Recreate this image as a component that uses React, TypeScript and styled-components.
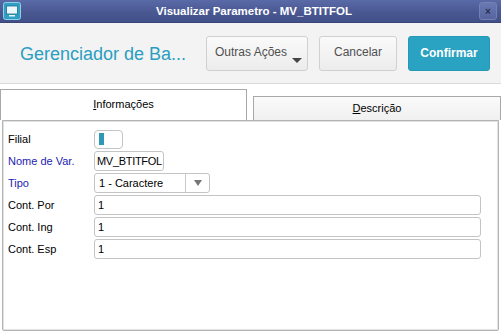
import { type FC } from "react";
import styled, { createGlobalStyle } from "styled-components";

const GlobalStyle = createGlobalStyle`
  html, body {
    margin: 0;
    padding: 0;
    background: #ffffff;
    font-family: "Liberation Sans", Arial, sans-serif;
  }
`;

const Window = styled.div`
  width: 501px;
  height: 333px;
  display: flex;
  flex-direction: column;
  background: #ffffff;
  overflow: hidden;
`;

const TitleBar = styled.div`
  height: 23px;
  display: flex;
  align-items: center;
  padding: 0 3px;
  background: linear-gradient(#5a6aa8, #4a5892 55%, #42508a);
  border-bottom: 1px solid #3a4678;
  box-sizing: border-box;
`;

const TitleText = styled.div`
  flex: 1;
  text-align: center;
  color: #ffffff;
  font-size: 11.5px;
  font-weight: bold;
  padding-left: 8px;
`;

const CloseButton = styled.div`
  width: 16px;
  height: 16px;
  border: 1px solid #7480b4;
  border-radius: 3px;
  background: linear-gradient(#6a78b4, #56649e);
  display: flex;
  align-items: center;
  justify-content: center;
  color: #2a3050;
  font-size: 10px;
  font-weight: bold;
  margin-right: 1px;
`;

const Header = styled.div`
  height: 61px;
  display: flex;
  align-items: center;
  padding: 0 11px 0 20px;
  background: #f3f3f3;
  border-bottom: 1px solid #dadada;
  box-sizing: border-box;
`;

const AppTitle = styled.div`
  flex: 1;
  min-width: 0;
  white-space: nowrap;
  color: #2a9ec2;
  font-size: 18px;
  padding-top: 3px;
`;

const ActionButton = styled.div<{ $primary?: boolean; $w: number; $menu?: boolean }>`
  position: relative;
  flex: none;
  width: ${(p) => p.$w}px;
  height: 35px;
  margin-left: 11px;
  box-sizing: border-box;
  display: flex;
  align-items: center;
  justify-content: center;
  font-size: 12px;
  border-radius: 3px;
  color: ${(p) => (p.$primary ? "#ffffff" : "#505050")};
  font-weight: ${(p) => (p.$primary ? "bold" : "normal")};
  background: ${(p) => (p.$primary ? "#2aa2c2" : "linear-gradient(#fafafa, #ececec)")};
  border: 1px solid ${(p) => (p.$primary ? "#2598b6" : "#d0d0d0")};
  padding-bottom: ${(p) => (p.$primary ? 0 : 2)}px;
  padding-right: ${(p) => (p.$menu ? 12 : 0)}px;
`;

const Caret = styled.span`
  position: absolute;
  right: 5px;
  bottom: 7px;
  width: 0;
  height: 0;
  border-left: 5px solid transparent;
  border-right: 5px solid transparent;
  border-top: 5px solid #444;
`;

const TabStrip = styled.div`
  display: flex;
  align-items: flex-end;
  margin-top: 5px;
  height: 31px;
  gap: 6px;
`;

const Tab = styled.div<{ $active?: boolean }>`
  width: ${(p) => (p.$active ? 247 : 248)}px;
  height: ${(p) => (p.$active ? 31 : 24)}px;
  box-sizing: border-box;
  border: 1px solid #a8a8a8;
  border-bottom: none;
  background: ${(p) => (p.$active ? "#ffffff" : "linear-gradient(#fafafa, #f0f0f0)")};
  display: flex;
  align-items: center;
  justify-content: center;
  font-size: 11px;
  color: #000;
  padding-bottom: 2px;
  & u {
    text-decoration: underline;
  }
`;

const Panel = styled.div`
  margin: 0 2px 2px 2px;
  flex: 1;
  border: 1px solid #b4b4b4;
  box-shadow: inset 0 0 0 1px #e2e2e2;
  border-radius: 0 0 2px 2px;
  padding: 8px 17px 0 5px;
  display: flex;
  flex-direction: column;
  gap: 2px;
`;

const Row = styled.div`
  display: flex;
  align-items: center;
  min-height: 20px;
`;

const Label = styled.div<{ $blue?: boolean }>`
  width: 86px;
  flex: none;
  font-size: 11px;
  color: ${(p) => (p.$blue ? "#2323b4" : "#000")};
`;

const Field = styled.div<{ $w?: number; $tight?: boolean }>`
  ${(p) => (p.$w ? `width: ${p.$w}px; flex: none;` : "flex: 1;")}
  height: 20px;
  box-sizing: border-box;
  border: 1px solid #c4c4c4;
  border-radius: 3px;
  background: #fff;
  font-size: 11px;
  letter-spacing: ${(p) => (p.$tight ? "-0.3px" : "0")};
  padding: 0 ${(p) => (p.$tight ? 2 : 3)}px;
  display: flex;
  align-items: center;
  overflow: hidden;
  white-space: nowrap;
`;

const Toggle = styled.div`
  width: 29px;
  height: 19px;
  box-sizing: border-box;
  border: 1px solid #c4c4c4;
  border-radius: 4px;
  display: flex;
  align-items: center;
  padding-left: 4px;
  &::before {
    content: "";
    width: 5px;
    height: 12px;
    background: #2e98b6;
  }
`;

const SelectBox = styled(Field)`
  padding: 0;
`;

const SelectText = styled.div`
  flex: 1;
  padding-left: 4px;
`;

const SelectArrow = styled.div`
  width: 23px;
  height: 100%;
  border-left: 1px solid #c8c8c8;
  display: flex;
  align-items: center;
  justify-content: center;
  &::after {
    content: "";
    border-left: 4px solid transparent;
    border-right: 4px solid transparent;
    border-top: 6px solid #777;
  }
`;

const WindowIcon: FC = () => (
  <svg width="18" height="18" viewBox="0 0 18 18">
    <rect x="0.5" y="0.5" width="17" height="17" rx="2" fill="#2f9fc4" stroke="#8fd0e8" />
    <rect x="3.5" y="4" width="11" height="8" fill="#eaf6fb" stroke="#1c6f8c" strokeWidth="0.8" />
    <rect x="6" y="13" width="6" height="1.5" fill="#eaf6fb" />
  </svg>
);

const App: FC = function () {
  return (
    <>
      <GlobalStyle />
      <Window>
        <TitleBar>
          <WindowIcon />
          <TitleText>Visualizar Parametro - MV_BTITFOL</TitleText>
          <CloseButton>×</CloseButton>
        </TitleBar>
        <Header>
          <AppTitle>Gerenciador de Ba...</AppTitle>
          <ActionButton $w={102} $menu>
            Outras Ações
            <Caret />
          </ActionButton>
          <ActionButton $w={78}>Cancelar</ActionButton>
          <ActionButton $w={82} $primary>
            Confirmar
          </ActionButton>
        </Header>
        <TabStrip>
          <Tab $active>
            <span>
              <u>I</u>nformações
            </span>
          </Tab>
          <Tab>
            <span>
              <u>D</u>escrição
            </span>
          </Tab>
        </TabStrip>
        <Panel>
          <Row>
            <Label>Filial</Label>
            <Toggle />
          </Row>
          <Row>
            <Label $blue>Nome de Var.</Label>
            <Field $w={70} $tight>
              MV_BTITFOL
            </Field>
          </Row>
          <Row>
            <Label $blue>Tipo</Label>
            <SelectBox $w={116}>
              <SelectText>1 - Caractere</SelectText>
              <SelectArrow />
            </SelectBox>
          </Row>
          <Row>
            <Label>Cont. Por</Label>
            <Field>1</Field>
          </Row>
          <Row>
            <Label>Cont. Ing</Label>
            <Field>1</Field>
          </Row>
          <Row>
            <Label>Cont. Esp</Label>
            <Field>1</Field>
          </Row>
        </Panel>
      </Window>
    </>
  );
};

export default App;
